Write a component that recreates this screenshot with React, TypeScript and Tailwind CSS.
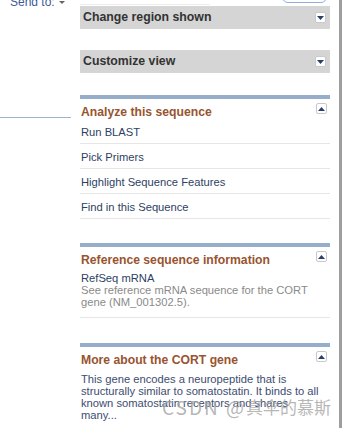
const analyzeLinks = ['Run BLAST', 'Pick Primers', 'Highlight Sequence Features', 'Find in this Sequence'];

const Toggle = ({ up }: { up?: boolean }) => (
  <span className="flex h-[11px] w-[11px] items-center justify-center rounded-[2px] border border-[#c9c9c9] bg-white">
    <svg width="7" height="4" viewBox="0 0 7 4">
      {up ? <path d="M0 4 L3.5 0 L7 4 Z" fill="#2a3f6b" /> : <path d="M0 0 L3.5 4 L7 0 Z" fill="#2a3f6b" />}
    </svg>
  </span>
);

const GrayBox = ({ title }: { title: string }) => (
  <div className="flex h-[23px] items-center justify-between bg-[#d5d5d5] pl-[3px] pr-[4px]">
    <span className="text-[12.3px] font-bold text-[#333]">{title}</span>
    <Toggle />
  </div>
);

const SectionHead = ({ title }: { title: string }) => (
  <>
    <div className="h-[4px] bg-[#97aecb]" />
    <div className="flex items-start justify-between pl-[1px] pr-[3px]">
      <span className="pt-[6px] text-[12.2px] font-bold leading-[14px] text-[#98542f]">{title}</span>
      <span className="pt-[4px]">
        <Toggle up />
      </span>
    </div>
  </>
);

export default function App() {
  return (
    <div className="relative h-[428px] w-[343px] overflow-hidden bg-white font-['Liberation_Sans',Arial,sans-serif]">
      <div className="flex h-full">
        {/* left column */}
        <div className="w-[80px] shrink-0">
          <div className="-mt-[5px] flex items-center gap-[4px] pl-[10px] text-[12px] leading-[14px] text-[#3a5a9a]">
            <span>Send to:</span>
            <svg width="6" height="3" viewBox="0 0 6 3">
              <path d="M0 0 L3 3 L6 0 Z" fill="#666" />
            </svg>
          </div>
          <div className="mt-[108px] h-px w-[71px] bg-[#9db2cc]" />
        </div>

        {/* right column */}
        <div className="w-[250px] shrink-0">
          <div className="flex h-[6px] items-start">
            <div className="mt-[4px] h-px w-[130px] bg-[#ececec]" />
            <div className="ml-[72px] -mt-[10px] h-[13px] w-[45px] rounded-[6px] border border-[#8fb0da]" />
          </div>
          <GrayBox title="Change region shown" />
          <div className="h-[21px]" />
          <GrayBox title="Customize view" />

          <div className="mt-[22px]">
            <SectionHead title="Analyze this sequence" />
            <ul>
              {analyzeLinks.map((l) => (
                <li key={l} className="h-[25px] border-b border-[#e6e6e6] pl-[1px] pt-[7px] text-[11.2px] leading-[13px] text-[#2d3f63]">
                  {l}
                </li>
              ))}
            </ul>
          </div>

          <div className="mt-[24px]">
            <SectionHead title="Reference sequence information" />
            <div className="border-b border-[#e6e6e6] pb-[9px] pl-[1px] pt-[5px] text-[11.2px] leading-[12px]">
              <div className="text-[#2d3f63]">RefSeq mRNA</div>
              <div className="text-[#8a8a8a]">See reference mRNA sequence for the CORT gene (NM_001302.5).</div>
            </div>
          </div>

          <div className="mt-[25px]">
            <SectionHead title="More about the CORT gene" />
            <p className="pl-[1px] pt-[6px] text-[11.2px] leading-[12px] text-[#3c4d70]">
              This gene encodes a neuropeptide that is structurally similar to somatostatin. It binds to all known
              somatostatin receptors and shares
              <br />
              many...
            </p>
          </div>
        </div>

        <div className="ml-[9px] w-[3px] shrink-0 bg-[#9e9e9e]" />
      </div>

      {/* watermark */}
      <div className="pointer-events-none absolute left-[162px] top-[397px] flex items-end font-['Noto_Sans_CJK_SC',sans-serif] leading-[19px] text-[#a4a4a4]/80">
        <span className="text-[19px] tracking-[2px]">CSDN @</span>
        <span className="text-[17px]">真伞的慕斯</span>
      </div>
    </div>
  );
}
